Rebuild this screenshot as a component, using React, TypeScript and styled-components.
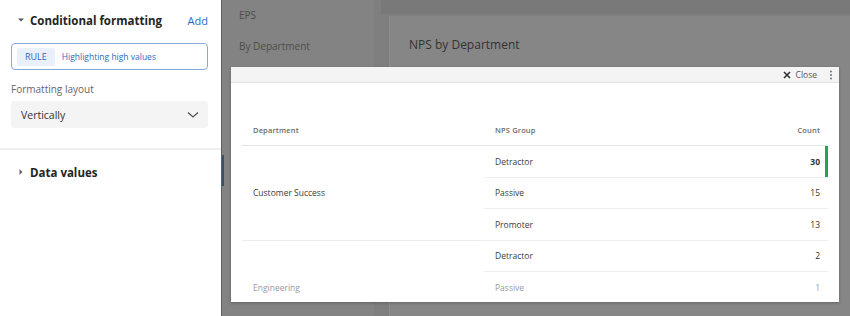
import styled, { createGlobalStyle } from "styled-components";

const GlobalStyle = createGlobalStyle`
  html, body {
    margin: 0;
    padding: 0;
    background: #7f7f7f;
    font-family: "Open Sans", "Noto Sans", sans-serif;
  }
  * {
    box-sizing: border-box;
  }
`;

interface Row {
  group: string;
  count: number;
  highlight?: boolean;
}

interface Department {
  name: string;
  rows: Row[];
  faded?: boolean;
}

const departments: Department[] = [
  {
    name: "Customer Success",
    rows: [
      { group: "Detractor", count: 30, highlight: true },
      { group: "Passive", count: 15 },
      { group: "Promoter", count: 13 },
    ],
  },
  {
    name: "Engineering",
    faded: true,
    rows: [
      { group: "Detractor", count: 2 },
      { group: "Passive", count: 1 },
    ],
  },
];

function CaretDown() {
  return (
    <svg width="8" height="8" viewBox="0 0 8 8">
      <path d="M1 2.5 L7 2.5 L4 5.5 Z" fill="#555" />
    </svg>
  );
}

function CaretRight() {
  return (
    <svg width="8" height="8" viewBox="0 0 8 8">
      <path d="M2.5 1 L5.5 4 L2.5 7 Z" fill="#666" />
    </svg>
  );
}

function Chevron() {
  return (
    <svg width="12" height="8" viewBox="0 0 12 8">
      <path d="M1 1.5 L6 6 L11 1.5" fill="none" stroke="#555" strokeWidth="1.3" />
    </svg>
  );
}

function CloseIcon() {
  return (
    <svg width="8" height="8" viewBox="0 0 8 8">
      <path d="M1 1 L7 7 M7 1 L1 7" stroke="#333" strokeWidth="1.6" />
    </svg>
  );
}

function Kebab() {
  return (
    <svg width="4" height="10" viewBox="0 0 4 10">
      <circle cx="2" cy="1.5" r="0.9" fill="#666" />
      <circle cx="2" cy="5" r="0.9" fill="#666" />
      <circle cx="2" cy="8.5" r="0.9" fill="#666" />
    </svg>
  );
}

export default function App() {
  return (
    <>
      <GlobalStyle />
      <Page>
        <Sidebar>
          <SectionHeader>
            <CaretDown />
            <SectionTitle>Conditional formatting</SectionTitle>
            <AddLink>Add</AddLink>
          </SectionHeader>
          <RuleBox>
            <RuleTag>RULE</RuleTag>
            <RuleName>Highlighting high values</RuleName>
          </RuleBox>
          <FieldLabel>Formatting layout</FieldLabel>
          <Select>
            <span>Vertically</span>
            <Chevron />
          </Select>
          <Divider />
          <SectionHeader>
            <CaretRight />
            <SectionTitle>Data values</SectionTitle>
          </SectionHeader>
        </Sidebar>

        <Backdrop>
          <DimNav>
            <DimNavItem>EPS</DimNavItem>
            <DimNavItem>By Department</DimNavItem>
            <DimNavItem $active />
          </DimNav>
          <DimMain>
            <DimTopBar />
            <DimCard>NPS by Department</DimCard>
          </DimMain>

          <Modal>
            <ModalBar>
              <CloseButton>
                <CloseIcon />
                Close
              </CloseButton>
              <Kebab />
            </ModalBar>
            <Table>
              <HeadCell>Department</HeadCell>
              <HeadCell>NPS Group</HeadCell>
              <HeadCell $right>Count</HeadCell>
              {departments.map((dep) => (
                <DeptGroup key={dep.name} $rows={dep.rows.length}>
                  <DeptCell $faded={dep.faded}>
                    <span>{dep.name}</span>
                  </DeptCell>
                  {dep.rows.map((row, i) => {
                    const faded = dep.faded && i === dep.rows.length - 1;
                    return (
                      <RowCells key={i}>
                        <GroupCell $faded={faded}>{row.group}</GroupCell>
                        <CountCell $faded={faded} $highlight={row.highlight}>
                          {row.count}
                        </CountCell>
                      </RowCells>
                    );
                  })}
                </DeptGroup>
              ))}
            </Table>
          </Modal>
        </Backdrop>
      </Page>
    </>
  );
}

const Page = styled.div`
  display: flex;
  width: 850px;
  height: 316px;
  overflow: hidden;
`;

const Sidebar = styled.div`
  width: 221px;
  flex-shrink: 0;
  background: #ffffff;
  display: flex;
  flex-direction: column;
  padding-top: 11px;
`;

const SectionHeader = styled.div`
  display: flex;
  align-items: center;
  gap: 5px;
  height: 18px;
  padding: 0 13px 0 17px;
`;

const SectionTitle = styled.div`
  flex: 1;
  font-size: 11.5px;
  font-weight: 700;
  color: #242424;
`;

const AddLink = styled.span`
  font-size: 11px;
  color: #1b6bcf;
`;

const RuleBox = styled.div`
  margin: 14px 13px 0 11px;
  height: 27px;
  border: 1px solid #86a9da;
  border-radius: 4px;
  display: flex;
  align-items: center;
  gap: 7px;
  padding: 0 5px;
`;

const RuleTag = styled.span`
  background: #e9f0fa;
  color: #2c6bbd;
  font-size: 9px;
  height: 18px;
  padding: 0 8px;
  display: flex;
  align-items: center;
  border-radius: 2px;
`;

const RuleName = styled.span`
  color: #2c6bbd;
  font-size: 8.5px;
`;

const FieldLabel = styled.div`
  margin: 12px 0 0 11px;
  font-size: 10px;
  color: #666;
  height: 15px;
  line-height: 15px;
`;

const Select = styled.div`
  margin: 4px 13px 0 11px;
  height: 27px;
  background: #f4f4f4;
  border-radius: 3px;
  display: flex;
  align-items: center;
  justify-content: space-between;
  padding: 0 9px 0 10px;
  font-size: 10.5px;
  color: #333;
`;

const Divider = styled.div`
  margin: 20px 0 13px;
  height: 2px;
  background: #f0f0f0;
`;

const Backdrop = styled.div`
  position: relative;
  flex: 1;
  display: flex;
  background: #7f7f7f;
  border-left: 1px solid #5f5f5f;
`;

const DimNav = styled.div`
  width: 152px;
  background: #838383;
  display: flex;
  flex-direction: column;
  padding-top: 7px;
`;

const DimNavItem = styled.div<{ $active?: boolean }>`
  height: 31px;
  line-height: 16px;
  padding-left: 17px;
  font-size: 10px;
  color: #4d4d4d;
  margin-top: ${(p) => (p.$active ? "86px" : "0")};
  border-left: ${(p) => (p.$active ? "2px solid #35536f" : "none")};
`;

const DimMain = styled.div`
  flex: 1;
  display: flex;
  flex-direction: column;
  padding-left: 15px;
`;

const DimTopBar = styled.div`
  height: 14px;
  background: #797979;
  margin-left: -8px;
`;

const DimCard = styled.div`
  margin-top: 2px;
  flex: 1;
  background: #868686;
  border-left: 1px solid #8d8d8d;
  padding: 20px 0 0 19px;
  font-size: 12px;
  color: #333;
`;

const Modal = styled.div`
  position: absolute;
  left: 9px;
  top: 67px;
  width: 608px;
  height: 235px;
  background: #ffffff;
  box-shadow: 0 1px 3px rgba(0, 0, 0, 0.25);
  overflow: hidden;
  display: flex;
  flex-direction: column;
`;

const ModalBar = styled.div`
  height: 16px;
  flex-shrink: 0;
  background: #f4f4f5;
  border-bottom: 1px solid #e2e2e4;
  display: flex;
  align-items: center;
  justify-content: flex-end;
  gap: 12px;
  padding-right: 6px;
`;

const CloseButton = styled.div`
  display: flex;
  align-items: center;
  gap: 5px;
  font-size: 8.5px;
  color: #555;
`;

const Table = styled.div`
  margin: 0 11px;
  display: grid;
  grid-template-columns: 242px 1fr 140px;
`;

const HeadCell = styled.div<{ $right?: boolean }>`
  height: 63px;
  display: flex;
  align-items: flex-end;
  justify-content: ${(p) => (p.$right ? "flex-end" : "flex-start")};
  padding: 0 ${(p) => (p.$right ? "8px" : "0")} 10px 11px;
  font-size: 7.5px;
  font-weight: 600;
  letter-spacing: 0.15px;
  color: #6b6b6b;
  border-bottom: 1px solid #e4e4e4;
`;

const DeptGroup = styled.div<{ $rows: number }>`
  grid-column: 1 / -1;
  display: grid;
  grid-template-columns: subgrid;
  grid-template-rows: repeat(${(p) => p.$rows}, 31.5px);
`;

const DeptCell = styled.div<{ $faded?: boolean }>`
  grid-column: 1;
  grid-row: 1 / -1;
  display: flex;
  align-items: center;
  padding: ${(p) => (p.$faded ? "32px 0 0 11px" : "0 0 0 11px")};
  font-size: 8.5px;
  color: ${(p) => (p.$faded ? "#9a9a9a" : "#3a3a3a")};
  border-bottom: 1px solid #ececec;
`;

const RowCells = styled.div`
  grid-column: 2 / -1;
  display: grid;
  grid-template-columns: subgrid;
  border-bottom: 1px solid #efefef;
`;

const GroupCell = styled.div<{ $faded?: boolean }>`
  display: flex;
  align-items: center;
  padding-left: 11px;
  font-size: 8.5px;
  color: ${(p) => (p.$faded ? "#9a9a9a" : "#3a3a3a")};
`;

const CountCell = styled.div<{ $faded?: boolean; $highlight?: boolean }>`
  display: flex;
  align-items: center;
  justify-content: flex-end;
  padding-right: 5px;
  font-size: 8.5px;
  font-weight: ${(p) => (p.$highlight ? 700 : 400)};
  color: ${(p) => (p.$faded ? "#9a9a9a" : "#333")};
  border-right: 3px solid ${(p) => (p.$highlight ? "#21a453" : "transparent")};
`;
